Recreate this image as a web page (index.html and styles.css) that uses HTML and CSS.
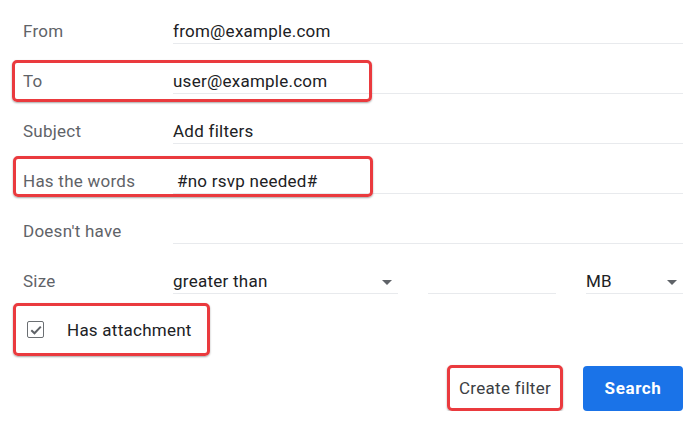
FILE: index.html
```html
<!DOCTYPE html>
<html lang="en">
<head>
  <meta charset="utf-8">
  <title>Filter</title>
  <link rel="stylesheet" href="styles.css">
</head>
<body>
<div class="filter-box">
  <div class="row">
    <div class="label">From</div>
    <div class="field">from@example.com</div>
  </div>
  <div class="row marked mark-to">
    <div class="label">To</div>
    <div class="field">user@example.com</div>
  </div>
  <div class="row">
    <div class="label">Subject</div>
    <div class="field">Add filters</div>
  </div>
  <div class="row marked mark-words">
    <div class="label">Has the words</div>
    <div class="field indent">#no rsvp needed#</div>
  </div>
  <div class="row">
    <div class="label">Doesn't have</div>
    <div class="field"></div>
  </div>
  <div class="row">
    <div class="label">Size</div>
    <div class="size-line">
      <div class="field select sel-op">greater than<span class="arrow"></span></div>
      <div class="field num"></div>
      <div class="field select sel-unit">MB<span class="arrow"></span></div>
    </div>
  </div>
  <div class="check-row">
    <div class="check-wrap marked">
      <span class="checkbox">
        <svg width="14" height="14" viewBox="0 0 14 14"><path d="M2.3 7.2 L5.5 10.3 L11.8 3.6" fill="none" stroke="#5f6368" stroke-width="2"/></svg>
      </span>
      <span class="check-text">Has attachment</span>
    </div>
  </div>
  <div class="actions">
    <button type="button" class="btn-link marked">Create filter</button>
    <button type="button" class="btn-primary">Search</button>
  </div>
</div>
</body>
</html>
```

FILE: styles.css
```css
body {
  margin: 0;
  background: #fff;
  font-family: Roboto, "Liberation Sans", sans-serif;
  font-size: 17px;
  letter-spacing: 0.25px;
  color: #202124;
}
.filter-box {
  width: 698px;
  padding: 6px 15px 0 0;
  box-sizing: border-box;
}
.row {
  position: relative;
  display: flex;
  align-items: center;
  height: 50px;
}
.label {
  width: 150px;
  padding-left: 23px;
  color: #5f6368;
  flex-shrink: 0;
}
.field {
  flex: 1;
  height: 24px;
  line-height: 24px;
  border-bottom: 1px solid #e8eaed;
  white-space: nowrap;
}
.indent {
  padding-left: 4px;
}
.size-line {
  flex: 1;
  display: flex;
  gap: 30px;
}
.select {
  position: relative;
}
.sel-op {
  flex: 0 0 225px;
}
.num {
  flex: 0 0 128px;
}
.sel-unit {
  flex: 1;
}
.arrow {
  position: absolute;
  right: 6px;
  top: 11px;
  border-left: 5px solid transparent;
  border-right: 5px solid transparent;
  border-top: 5px solid #5f6368;
}
.check-row {
  height: 53px;
  margin-top: -3px;
  display: flex;
  align-items: center;
}
.check-wrap {
  position: relative;
  display: flex;
  align-items: center;
  margin-left: 13px;
  width: 197px;
  height: 53px;
  box-sizing: border-box;
  padding-left: 14px;
}
.checkbox {
  width: 15px;
  height: 15px;
  border: 1.5px solid #6b6f73;
  border-radius: 2px;
  display: flex;
  align-items: center;
  justify-content: center;
}
.check-text {
  margin-left: 23px;
}
.actions {
  display: flex;
  justify-content: flex-end;
  align-items: center;
  gap: 20px;
  margin-top: 9px;
}
button {
  font-family: Roboto, "Liberation Sans", sans-serif;
  font-size: 17px;
  letter-spacing: 0.3px;
  border: 0;
  background: none;
  padding: 0;
}
.btn-link {
  position: relative;
  height: 46px;
  width: 116px;
  color: #3c4043;
}
.btn-primary {
  width: 100px;
  height: 45px;
  border-radius: 4px;
  background: #1a73e8;
  color: #fff;
  font-weight: 700;
  letter-spacing: 0.6px;
}
.marked::after {
  content: "";
  position: absolute;
  border: 3px solid #ea3a3e;
  border-radius: 5px;
  box-shadow: 0 1px 2px rgba(0, 0, 0, 0.35);
  pointer-events: none;
}
.mark-to::after {
  left: 12px;
  top: 4px;
  width: 354px;
  height: 36px;
}
.mark-words::after {
  left: 13px;
  top: 0;
  width: 354px;
  height: 35px;
}
.check-wrap.marked::after {
  inset: 0;
}
.btn-link.marked::after {
  inset: 0;
}
```
